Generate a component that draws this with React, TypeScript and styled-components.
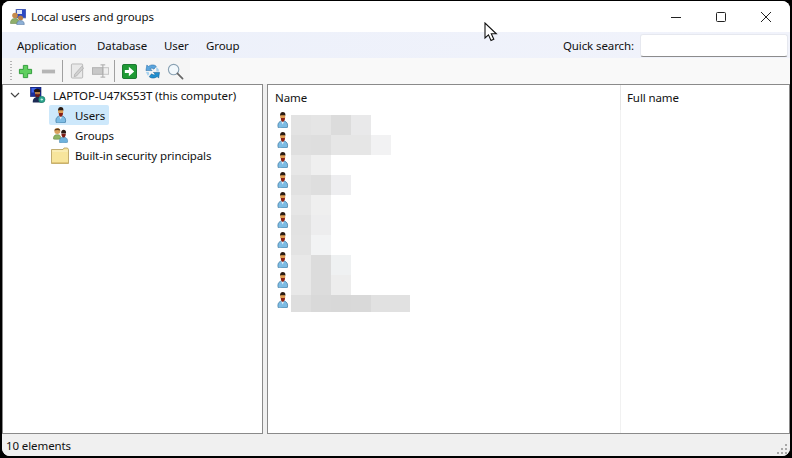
import React from 'react';
import styled, { createGlobalStyle } from 'styled-components';

const GlobalStyle = createGlobalStyle`
  html, body {
    margin: 0;
    padding: 0;
    background: #000;
    overflow: hidden;
  }
  * { box-sizing: border-box; }
`;

const Window = styled.div`
  width: 788px;
  height: 455px;
  margin: 1px 2px 2px 2px;
  background: #fff;
  border-radius: 8px;
  overflow: hidden;
  display: flex;
  flex-direction: column;
  position: relative;
  font-family: 'Noto Sans', 'Open Sans', sans-serif;
  font-size: 11.5px;
  letter-spacing: -0.1px;
  color: #111;
`;

const TitleBar = styled.div`
  height: 31px;
  display: flex;
  align-items: center;
  padding: 0 2px 0 8px;
  background: #fff;
`;

const TitleIcon = styled.div`
  width: 16px;
  height: 16px;
  flex: none;
  display: flex;
`;

const TitleText = styled.span`
  margin-left: 5px;
  flex: 1;
`;

const WinButton = styled.div`
  width: 45px;
  height: 31px;
  display: flex;
  align-items: center;
  justify-content: center;
`;

const MenuBar = styled.div`
  height: 26px;
  display: flex;
  align-items: center;
  background: linear-gradient(90deg, #ecf0fa, #f1f3fb);
  padding-left: 15px;
`;

const MenuItem = styled.span<{ $w: number }>`
  width: ${p => p.$w}px;
`;

const SearchLabel = styled.span`
  margin-left: auto;
  margin-right: 6px;
`;

const SearchInput = styled.div`
  width: 148px;
  height: 23px;
  margin-right: 2px;
  background: #fff;
  border: 1px solid #e6e8ef;
  border-bottom: 1px solid #8c8c8c;
  border-radius: 3px;
`;

const ToolbarRow = styled.div`
  height: 26px;
  background: #f9f9f9;
  display: flex;
`;

const Toolbar = styled.div`
  width: 188px;
  background: #f5f5f5;
  display: flex;
  align-items: center;
  padding-left: 8px;
`;

const Grip = styled.div`
  width: 2px;
  height: 20px;
  margin-right: 2px;
  background: repeating-linear-gradient(#b4b4b4 0 1px, transparent 1px 3px);
`;

const ToolButton = styled.div`
  width: 23px;
  height: 22px;
  display: flex;
  align-items: center;
  justify-content: center;
`;

const ToolSep = styled.div`
  width: 1px;
  height: 22px;
  background: #a0a0a0;
  margin: 0 3px 0 2px;
`;

const Panes = styled.div`
  flex: 1;
  display: flex;
  gap: 4px;
  min-height: 0;
  background: #f0f0f0;
`;

const TreePane = styled.div`
  width: 261px;
  background: #fff;
  border: 1px solid #8a8a8a;
`;

const TreeRow = styled.div<{ $indent: number }>`
  height: 20px;
  display: flex;
  align-items: center;
  padding-left: ${p => p.$indent}px;
`;

const Chevron = styled.div`
  width: 21px;
  display: flex;
`;

const TreeIcon = styled.div<{ $w?: number; $gap?: number }>`
  width: ${p => p.$w ?? 16}px;
  height: 16px;
  flex: none;
  display: flex;
  margin-right: ${p => p.$gap ?? 6}px;
`;

const TreeLabel = styled.div<{ $selected?: boolean }>`
  display: flex;
  align-items: center;
  height: 20px;
  padding: 0 4px;
  margin-left: -4px;
  border-radius: 2px;
  background: ${p => (p.$selected ? '#cde8fb' : 'transparent')};
`;

const ListPane = styled.div`
  flex: 1;
  background: #fff;
  border: 1px solid #8a8a8a;
  display: flex;
  flex-direction: column;
  min-width: 0;
`;

const ListHeader = styled.div`
  height: 25px;
  display: flex;
  flex: none;
`;

const HeaderCell = styled.div<{ $w?: number }>`
  ${p => (p.$w ? `width: ${p.$w}px; border-right: 1px solid #e5e5e5;` : 'flex: 1;')}
  padding-left: ${p => (p.$w ? 7 : 6)}px;
  display: flex;
  align-items: center;
`;

const ListBody = styled.div`
  flex: 1;
  display: flex;
  min-height: 0;
`;

const NameColumn = styled.div`
  width: 353px;
  border-right: 1px solid #f1f1f1;
  padding-left: 7px;
`;

const UserRow = styled.div`
  height: 20px;
  display: flex;
  align-items: center;
`;

const BlurStrip = styled.div`
  display: flex;
  align-self: flex-start;
  margin-top: 5px;
`;

const BlurCell = styled.div<{ $c: string; $h?: number; $w?: number }>`
  width: ${p => p.$w ?? 20}px;
  height: ${p => p.$h ?? 20}px;
  background: ${p => p.$c};
`;

const StatusBar = styled.div`
  height: 22px;
  flex: none;
  background: #f0f0f0;
  display: flex;
  align-items: center;
  justify-content: space-between;
  padding: 0 2px 0 4px;
`;

const SizeGrip = styled.svg`
  align-self: flex-end;
  margin-bottom: 1px;
`;

const Cursor = styled.svg`
  position: absolute;
  left: 482px;
  top: 21px;
`;

const UserIcon = () => (
  <svg width="16" height="16" viewBox="0 0 16 16">
    <path d="M3.200 15.600c-1-3.400.6-6.300 3.300-6.500h2.600c2.800.3 4.100 3.200 3.300 6.300-1 .6-8 .7-9.200.2z" fill="#7dbce4" stroke="#3c779f" strokeWidth=".7" />
    <path d="M6.200 9.300l1.500 3.300 1.500-3.300z" fill="#e2f0f9" />
    <path d="M5 3.300C5 1.200 6.200 0 7.800 0s2.700 1.200 2.600 3l-.3 1H5.200z" fill="#2b1a10" />
    <path d="M5.200 3.200h5v2.900h-5z" fill="#dd9d52" />
    <path d="M5.800 5.700c.5.500 1 .3 2 .3s1.600.2 2.200-.3c.2 2-.8 4-2.200 4S5.600 7.700 5.800 5.700z" fill="#8a2015" />
  </svg>
);

const GroupIcon = () => (
  <svg width="16" height="16" viewBox="0 0 16 16">
    <path d="M.5 12c-.3-2.600.9-4.200 3-4.300h1.600c2 .2 2.800 1.600 2.600 4.100-.6.600-6.500.7-7.200.2z" fill="#8eb565" stroke="#5d7d3d" strokeWidth=".5" />
    <circle cx="4.300" cy="4" r="3" fill="#d9a25f" />
    <path d="M1.400 3.500c.2-2.400 5.400-3 5.900 0-1.800-.8-4-.8-5.900 0z" fill="#5d3a1c" />
    <path d="M6.500 15.500c-.5-3 .8-5 3-5.200h2c2.300.2 3.500 2.200 3 5-.6.600-7.100.7-8 .2z" fill="#6fb2dc" stroke="#3f7ca8" strokeWidth=".5" />
    <path d="M8.200 5.500c0-1.700 1-2.700 2.400-2.700s2.500 1 2.400 2.700l-.2 1.100H8.500z" fill="#2a1a12" />
    <path d="M8.400 6.400c.6.500 3.800.5 4.400 0 .1 2.100-.8 4-2.200 4s-2.300-1.900-2.200-4z" fill="#7c1c14" />
  </svg>
);

const AppIcon = () => (
  <svg width="16" height="16" viewBox="0 0 16 16">
    <rect x="6" y="0" width="10" height="9" fill="#2c49c4" stroke="#7d86a8" strokeWidth=".7" />
    <rect x="7" y="1" width="5" height="4" fill="#dfe6f7" />
    <circle cx="5" cy="6.500" r="2.800" fill="#c68a4a" />
    <path d="M.5 14.500c-.3-3 1.200-5 4.500-5s3.800 2 4 5z" fill="#8fae6b" stroke="#5d7d3d" strokeWidth=".5" />
    <circle cx="10.500" cy="9" r="2.500" fill="#b57c45" />
    <path d="M6.800 15.800c-.3-2.600 1-4.200 3.700-4.200s4.100 1.600 3.700 4.200z" fill="#8fb1d6" stroke="#4b6e96" strokeWidth=".5" />
  </svg>
);

const ComputerIcon = () => (
  <svg width="16" height="16" viewBox="0 0 16 16">
    <rect x="0.500" y="0" width="10.500" height="9.500" fill="#1a2f9c" stroke="#0d1a66" strokeWidth=".6" />
    <rect x="1.500" y="1" width="5" height="4.500" fill="#3f63e6" />
    <path d="M4 3.500C4.500 1 10 1 10.500 3.800l-.2 1.700H4.300z" fill="#1d1410" />
    <path d="M5 5h5v2.500H5z" fill="#b57c45" />
    <path d="M5 7c.8.500 4 .5 5 0 0 2-1 3.500-2.500 3.500S5 9 5 7z" fill="#681c18" />
    <path d="M2.800 15.500c-.4-3 1.200-5.500 4.700-5.500s5 2.500 4.700 5.500z" fill="#1d2a55" />
    <circle cx="11.800" cy="12.500" r="3.200" fill="#2ca58d" stroke="#126b5a" strokeWidth=".5" />
    <path d="M10.600 12.500h2.400M11.800 11.300v2.400" stroke="#d5f5ec" strokeWidth=".8" />
  </svg>
);

const FolderIcon = () => (
  <svg width="18" height="17" viewBox="0 0 18 17">
    <path d="M.5 16.500V2.500h11.500l1-1.500h3.500l1 1.500v14z" fill="#f7e59c" stroke="#b49a58" strokeWidth=".8" />
    <path d="M1.200 4h15.600" stroke="#fbf3ca" strokeWidth="1" />
    <path d="M1 15.800h16" stroke="#d8bb6c" strokeWidth="1" />
  </svg>
);

const AddIcon = () => (
  <svg width="15" height="15" viewBox="0 0 16 16">
    <path d="M5.700 1.500h4.600v4.200h4.200v4.600h-4.200v4.200H5.700v-4.200H1.500V5.700h4.200z" fill="#5fcf5f" stroke="#2f9a3a" strokeWidth="1" />
  </svg>
);

const RemoveIcon = () => (
  <svg width="15" height="15" viewBox="0 0 16 16">
    <rect x="1" y="6" width="14" height="4" fill="#b5b5b5" />
  </svg>
);

const EditIcon = () => (
  <svg width="15" height="16" viewBox="0 0 16 16">
    <rect x="1.500" y=".5" width="12" height="15" rx="1" fill="#e9e9e9" stroke="#b5b5b5" />
    <path d="M5 11.500l7.500-8.500 2 1.800-7.500 8.500-2.600.7z" fill="#d0d0d0" stroke="#a8a8a8" strokeWidth=".7" />
  </svg>
);

const RenameIcon = () => (
  <svg width="17" height="16" viewBox="0 0 18 16">
    <rect x=".5" y="4.500" width="11" height="7" fill="#c8c8c8" stroke="#b0b0b0" />
    <rect x="11.500" y="4.500" width="6" height="7" fill="#efefef" stroke="#c4c4c4" />
    <path d="M9 1.500h5M11.500 1.500v13M9 14.500h5" stroke="#a5a5a5" strokeWidth="1" fill="none" />
  </svg>
);

const GoIcon = () => (
  <svg width="15" height="15" viewBox="0 0 16 16">
    <rect x=".5" y=".5" width="15" height="15" rx="1.500" fill="#1f9a35" stroke="#13702a" />
    <path d="M3 6.300h4.300V3L13 8l-5.700 5V9.700H3z" fill="#fff" />
  </svg>
);

const RefreshIcon = () => (
  <svg width="15" height="15" viewBox="0 0 16 16">
    <path d="M2 1l1.500 1.700C6 .5 10 .5 12 2.500l-2.500 3C8 4 6.500 4.300 5.500 5L7.500 7H1z" fill="#5aa5de" stroke="#2a6ea8" strokeWidth=".6" />
    <path d="M14.500 15L13 13.300c-2.500 2.200-6.500 2.200-8.500.2l2.500-3c1.500 1.500 3 1.200 4 .5L9 9h6.500z" fill="#1f8fd0" stroke="#155e94" strokeWidth=".6" />
    <path d="M12 3l2.500 2.500L15 8h-3zM1 8.500h3l.5 2.500L3 12.500z" fill="#a7d2ee" />
  </svg>
);

const SearchIcon = () => (
  <svg width="17" height="17" viewBox="0 0 18 18">
    <circle cx="7" cy="7" r="5.500" fill="#f2f8fc" stroke="#8aa2b4" strokeWidth="1.200" />
    <path d="M11 11l5.500 5.500" stroke="#666" strokeWidth="1.800" strokeLinecap="round" />
  </svg>
);

const rows: string[][] = [
  ['#e3e3e3', '#e5e5e5', '#dcdcdc', '#e9e9ea'],
  ['#dfdfdf', '#dedede', '#e6e6e6', '#e6e6e6', '#f2f2f3'],
  ['#e7e7e7', '#efefef'],
  ['#e1e1e1', '#dedede', '#eeeef0'],
  ['#e6e6e6', '#efefef'],
  ['#e2e2e2', '#ededee'],
  ['#e3e3e3', '#f2f3f4'],
  ['#e8e8e8', '#dcdcdc', '#eff1f2'],
  ['#e8e8e8', '#dcdcdc', '#ededed'],
  ['#dedede', '#d9d9d9', '#d8d8d8', '#d9d9d9', '#e1e1e1'],
];

const App = () => (
  <>
    <GlobalStyle />
    <Window>
      <TitleBar>
        <TitleIcon><AppIcon /></TitleIcon>
        <TitleText>Local users and groups</TitleText>
        <WinButton>
          <svg width="12" height="12" viewBox="0 0 12 12"><path d="M1 6.500h10" stroke="#222" /></svg>
        </WinButton>
        <WinButton>
          <svg width="12" height="12" viewBox="0 0 12 12"><rect x="1.500" y="1.500" width="9" height="9" rx="1" fill="none" stroke="#222" /></svg>
        </WinButton>
        <WinButton>
          <svg width="12" height="12" viewBox="0 0 12 12"><path d="M1 1l10 10M11 1L1 11" stroke="#222" /></svg>
        </WinButton>
      </TitleBar>
      <MenuBar>
        <MenuItem $w={80}>Application</MenuItem>
        <MenuItem $w={67}>Database</MenuItem>
        <MenuItem $w={42}>User</MenuItem>
        <MenuItem $w={40}>Group</MenuItem>
        <SearchLabel>Quick search:</SearchLabel>
        <SearchInput />
      </MenuBar>
      <ToolbarRow>
        <Toolbar>
          <Grip />
          <ToolButton><AddIcon /></ToolButton>
          <ToolButton><RemoveIcon /></ToolButton>
          <ToolSep />
          <ToolButton><EditIcon /></ToolButton>
          <ToolButton><RenameIcon /></ToolButton>
          <ToolSep />
          <ToolButton><GoIcon /></ToolButton>
          <ToolButton><RefreshIcon /></ToolButton>
          <ToolButton><SearchIcon /></ToolButton>
        </Toolbar>
      </ToolbarRow>
      <Panes>
        <TreePane>
          <TreeRow $indent={6}>
            <Chevron>
              <svg width="12" height="12" viewBox="0 0 12 12"><path d="M2 4l4 4 4-4" fill="none" stroke="#444" strokeWidth="1.200" /></svg>
            </Chevron>
            <TreeIcon $gap={7}><ComputerIcon /></TreeIcon>
            <span>LAPTOP-U47KS53T (this computer)</span>
          </TreeRow>
          <TreeRow $indent={50}>
            <TreeLabel $selected>
              <TreeIcon><UserIcon /></TreeIcon>
              <span>Users</span>
            </TreeLabel>
          </TreeRow>
          <TreeRow $indent={50}>
            <TreeIcon><GroupIcon /></TreeIcon>
            <span>Groups</span>
          </TreeRow>
          <TreeRow $indent={48}>
            <TreeIcon $w={18}><FolderIcon /></TreeIcon>
            <span>Built-in security principals</span>
          </TreeRow>
        </TreePane>
        <ListPane>
          <ListHeader>
            <HeaderCell $w={353}>Name</HeaderCell>
            <HeaderCell>Full name</HeaderCell>
          </ListHeader>
          <ListBody>
            <NameColumn>
              {rows.map((cells, r) => (
                <UserRow key={r}>
                  <UserIcon />
                  <BlurStrip>
                    {cells.map((c, i) => (
                      <BlurCell key={i} $c={c} $h={r === 9 ? 17 : 20} $w={r === 9 && i === 4 ? 39 : 20} />
                    ))}
                  </BlurStrip>
                </UserRow>
              ))}
            </NameColumn>
          </ListBody>
        </ListPane>
      </Panes>
      <StatusBar>
        <span>10 elements</span>
        <SizeGrip width="11" height="11" viewBox="0 0 11 11" fill="#a8a8a8">
          <rect x="8" y="0" width="2" height="2" />
          <rect x="4" y="4" width="2" height="2" />
          <rect x="8" y="4" width="2" height="2" />
          <rect x="0" y="8" width="2" height="2" />
          <rect x="4" y="8" width="2" height="2" />
          <rect x="8" y="8" width="2" height="2" />
        </SizeGrip>
      </StatusBar>
      <Cursor width="14" height="20" viewBox="0 0 14 20">
        <path d="M1 1v15l3.500-3.200 2.500 5.700 2.800-1.200-2.500-5.500h5z" fill="#fff" stroke="#111" strokeWidth="1.100" />
      </Cursor>
    </Window>
  </>
);

export default App;
